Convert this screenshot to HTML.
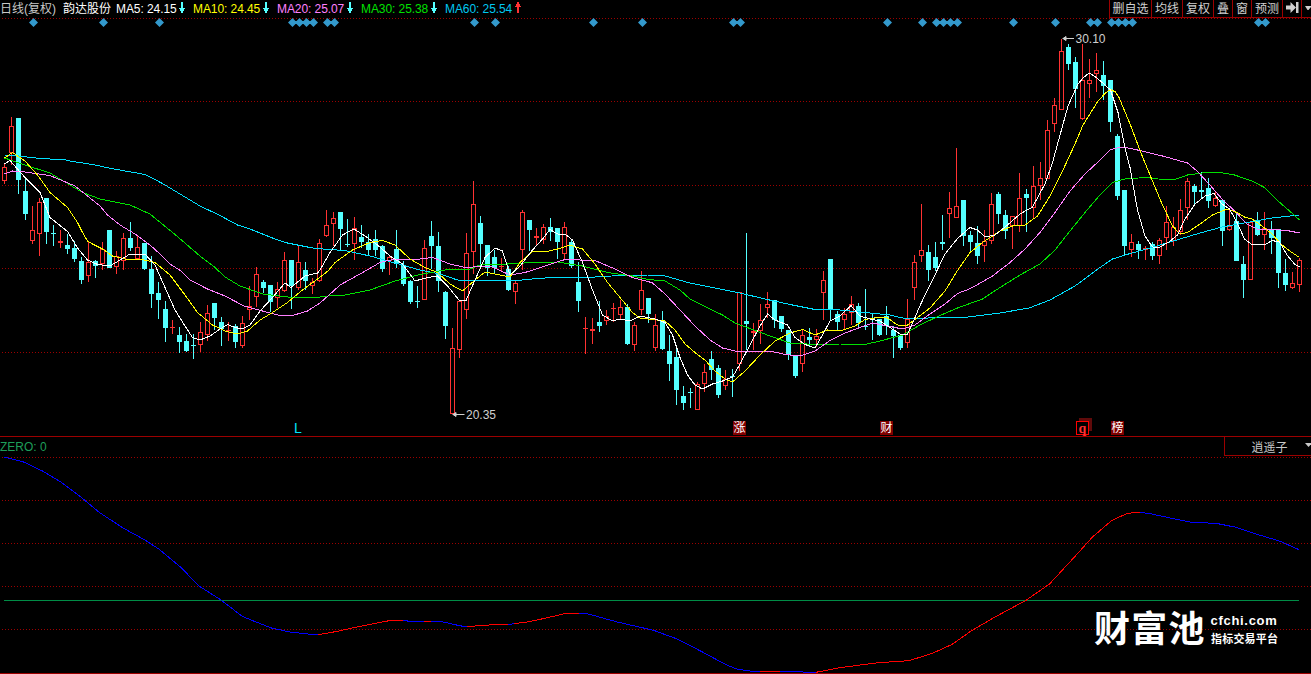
<!DOCTYPE html>
<html lang="zh"><head><meta charset="utf-8"><title>韵达股份 日线</title>
<style>
html,body{margin:0;padding:0;background:#000;}
body{width:1311px;height:674px;overflow:hidden;position:relative;font-family:"Liberation Sans","Noto Sans CJK SC",sans-serif;}
svg{position:absolute;left:0;top:0;display:block}
.t{position:absolute;white-space:nowrap;font-size:12px;line-height:14px;}
.hd{top:2px;}
.btn{position:absolute;top:0;height:18px;border-left:1px solid #9c0000;border-bottom:1px solid #9c0000;color:#d0d0d0;font-size:12px;line-height:19px;text-align:center;box-sizing:border-box;white-space:nowrap}
.tag{position:absolute;top:421px;width:13px;height:14px;background:#800000;color:#fff;font-size:12px;line-height:14px;text-align:center;overflow:hidden}
</style></head><body>
<svg width="1311" height="674" viewBox="0 0 1311 674">
<rect width="1311" height="674" fill="#000"/>
<g shape-rendering="crispEdges">
<line x1="2" y1="18.5" x2="1311" y2="18.5" stroke="#9c0000" stroke-width="1" stroke-dasharray="1 2"/>
<line x1="2" y1="101.5" x2="1311" y2="101.5" stroke="#9c0000" stroke-width="1" stroke-dasharray="1 2"/>
<line x1="2" y1="185.5" x2="1311" y2="185.5" stroke="#9c0000" stroke-width="1" stroke-dasharray="1 2"/>
<line x1="2" y1="268.5" x2="1311" y2="268.5" stroke="#9c0000" stroke-width="1" stroke-dasharray="1 2"/>
<line x1="2" y1="352.5" x2="1311" y2="352.5" stroke="#9c0000" stroke-width="1" stroke-dasharray="1 2"/>
<line x1="2" y1="457.5" x2="1311" y2="457.5" stroke="#9c0000" stroke-width="1" stroke-dasharray="1 2"/>
<line x1="2" y1="500.5" x2="1311" y2="500.5" stroke="#9c0000" stroke-width="1" stroke-dasharray="1 2"/>
<line x1="2" y1="543.5" x2="1311" y2="543.5" stroke="#9c0000" stroke-width="1" stroke-dasharray="1 2"/>
<line x1="2" y1="586.5" x2="1311" y2="586.5" stroke="#9c0000" stroke-width="1" stroke-dasharray="1 2"/>
<line x1="2" y1="629.5" x2="1311" y2="629.5" stroke="#9c0000" stroke-width="1" stroke-dasharray="1 2"/>

<line x1="0" y1="436.5" x2="1311" y2="436.5" stroke="#9c0000" stroke-width="1"/>
<line x1="0" y1="673.5" x2="1311" y2="673.5" stroke="#9c0000" stroke-width="1"/>
<line x1="4" y1="600.5" x2="1299" y2="600.5" stroke="#008c46" stroke-width="1"/>
<path d="M18 118h1v76h-1z M16 118h5v62h-5z M25 177h1v43h-1z M23 191h5v23h-5z M46 198h1v46h-1z M44 198h5v34h-5z M53 225h1v21h-1z M51 233h5v1h-5z M67 234h1v20h-1z M65 245h5v4h-5z M74 241h1v21h-1z M72 248h5v11h-5z M81 257h1v27h-1z M79 261h5v19h-5z M95 260h1v18h-1z M93 261h5v5h-5z M109 230h1v38h-1z M107 230h5v38h-5z M130 222h1v29h-1z M128 238h5v10h-5z M144 243h1v27h-1z M142 243h5v26h-5z M151 256h1v52h-1z M149 269h5v25h-5z M158 282h1v37h-1z M156 293h5v7h-5z M165 301h1v41h-1z M163 309h5v19h-5z M179 327h1v26h-1z M177 335h5v7h-5z M186 334h1v18h-1z M184 341h5v10h-5z M193 334h1v25h-1z M191 345h5v1h-5z M214 303h1v27h-1z M212 303h5v15h-5z M221 317h1v29h-1z M219 322h5v7h-5z M235 324h1v24h-1z M233 326h5v16h-5z M263 280h1v13h-1z M261 282h5v6h-5z M270 285h1v27h-1z M268 285h5v17h-5z M291 260h1v49h-1z M289 260h5v26h-5z M305 262h1v28h-1z M303 270h5v11h-5z M340 212h1v39h-1z M338 212h5v17h-5z M347 219h1v28h-1z M345 244h5v1h-5z M361 225h1v23h-1z M359 237h5v5h-5z M368 234h1v21h-1z M366 242h5v8h-5z M375 230h1v26h-1z M373 239h5v11h-5z M382 245h1v27h-1z M380 246h5v23h-5z M396 230h1v38h-1z M394 249h5v15h-5z M403 261h1v25h-1z M401 265h5v19h-5z M410 280h1v24h-1z M408 281h5v21h-5z M417 286h1v22h-1z M415 301h5v1h-5z M431 221h1v48h-1z M429 236h5v10h-5z M438 232h1v60h-1z M436 246h5v35h-5z M445 291h1v48h-1z M443 292h5v34h-5z M480 216h1v50h-1z M478 223h5v21h-5z M487 245h1v31h-1z M485 245h5v23h-5z M494 250h1v24h-1z M492 257h5v11h-5z M508 266h1v25h-1z M506 269h5v21h-5z M529 220h1v31h-1z M527 220h5v10h-5z M550 218h1v23h-1z M548 227h5v5h-5z M557 228h1v31h-1z M555 228h5v14h-5z M571 240h1v28h-1z M569 242h5v24h-5z M578 262h1v50h-1z M576 282h5v19h-5z M599 301h1v31h-1z M597 322h5v4h-5z M627 304h1v41h-1z M625 307h5v37h-5z M648 298h1v25h-1z M646 298h5v16h-5z M662 311h1v39h-1z M660 321h5v28h-5z M669 335h1v46h-1z M667 351h5v13h-5z M676 349h1v56h-1z M674 357h5v33h-5z M683 386h1v24h-1z M681 396h5v7h-5z M690 388h1v20h-1z M688 392h5v1h-5z M711 351h1v29h-1z M709 359h5v11h-5z M718 365h1v33h-1z M716 368h5v27h-5z M732 369h1v28h-1z M730 376h5v1h-5z M746 233h1v117h-1z M744 321h5v3h-5z M774 300h1v28h-1z M772 300h5v20h-5z M781 316h1v16h-1z M779 316h5v13h-5z M788 330h1v30h-1z M786 330h5v25h-5z M795 356h1v22h-1z M793 356h5v20h-5z M809 328h1v18h-1z M807 337h5v3h-5z M830 259h1v61h-1z M828 259h5v50h-5z M837 311h1v20h-1z M835 314h5v8h-5z M858 303h1v24h-1z M856 306h5v17h-5z M865 289h1v41h-1z M863 326h5v1h-5z M872 314h1v26h-1z M870 318h5v1h-5z M879 319h1v17h-1z M877 319h5v16h-5z M886 306h1v29h-1z M884 316h5v10h-5z M893 326h1v32h-1z M891 330h5v6h-5z M900 335h1v15h-1z M898 335h5v13h-5z M928 245h1v36h-1z M926 252h5v18h-5z M935 242h1v29h-1z M933 257h5v11h-5z M942 215h1v35h-1z M940 242h5v2h-5z M963 200h1v46h-1z M961 200h5v36h-5z M970 231h1v20h-1z M968 235h5v7h-5z M977 226h1v38h-1z M975 243h5v13h-5z M998 192h1v32h-1z M996 194h5v20h-5z M1005 210h1v29h-1z M1003 215h5v16h-5z M1026 189h1v43h-1z M1024 194h5v4h-5z M1068 44h1v26h-1z M1066 47h5v17h-5z M1075 57h1v51h-1z M1073 62h5v27h-5z M1103 61h1v39h-1z M1101 75h5v11h-5z M1110 80h1v52h-1z M1108 80h5v42h-5z M1117 134h1v66h-1z M1115 136h5v60h-5z M1124 190h1v65h-1z M1122 190h5v56h-5z M1138 241h1v18h-1z M1136 244h5v6h-5z M1152 242h1v18h-1z M1150 244h5v12h-5z M1194 184h1v22h-1z M1192 186h5v6h-5z M1201 172h1v27h-1z M1199 190h5v2h-5z M1208 178h1v30h-1z M1206 188h5v13h-5z M1222 200h1v46h-1z M1220 200h5v31h-5z M1236 212h1v49h-1z M1234 221h5v40h-5z M1243 256h1v42h-1z M1241 264h5v16h-5z M1257 212h1v24h-1z M1255 221h5v14h-5z M1271 221h1v33h-1z M1269 229h5v9h-5z M1278 229h1v59h-1z M1276 229h5v44h-5z M1285 259h1v32h-1z M1283 273h5v12h-5z" fill="#54ffff"/>
<path d="M4 163h1v4h-1z M4 181h1v3h-1z M11 117h1v9h-1z M11 153h1v12h-1z M32 206h1v24h-1z M32 241h1v3h-1z M39 198h1v4h-1z M39 234h1v22h-1z M60 230h1v11h-1z M60 243h1v5h-1z M58 241h5v2h-5z M88 241h1v21h-1z M88 276h1v6h-1z M102 242h1v7h-1z M102 264h1v6h-1z M116 251h1v5h-1z M116 267h1v7h-1z M123 233h1v5h-1z M123 261h1v9h-1z M137 235h1v12h-1z M137 259h1v1h-1z M172 320h1v7h-1z M172 328h1v6h-1z M170 327h5v1h-5z M200 322h1v10h-1z M200 345h1v7h-1z M207 305h1v8h-1z M207 335h1v6h-1z M228 322h1v8h-1z M228 331h1v10h-1z M226 330h5v1h-5z M242 316h1v7h-1z M242 346h1v2h-1z M249 286h1v20h-1z M249 310h1v10h-1z M256 267h1v7h-1z M256 297h1v10h-1z M277 282h1v7h-1z M277 298h1v10h-1z M284 252h1v8h-1z M284 291h1v1h-1z M298 246h1v16h-1z M298 288h1v2h-1z M312 278h1v4h-1z M312 286h1v8h-1z M319 239h1v4h-1z M319 281h1v1h-1z M326 210h1v15h-1z M326 236h1v1h-1z M333 212h1v6h-1z M333 224h1v22h-1z M354 217h1v11h-1z M354 244h1v16h-1z M389 255h1v2h-1z M389 261h1v14h-1z M424 240h1v8h-1z M452 328h1v20h-1z M459 350h1v8h-1z M466 233h1v20h-1z M466 310h1v9h-1z M473 181h1v23h-1z M473 252h1v22h-1z M501 258h1v8h-1z M501 267h1v5h-1z M499 266h5v1h-5z M515 281h1v2h-1z M515 292h1v12h-1z M522 210h1v2h-1z M522 250h1v20h-1z M536 228h1v8h-1z M536 238h1v7h-1z M534 236h5v2h-5z M543 224h1v3h-1z M543 240h1v4h-1z M564 222h1v5h-1z M564 254h1v5h-1z M585 317h1v11h-1z M585 329h1v25h-1z M583 328h5v1h-5z M592 318h1v11h-1z M592 331h1v13h-1z M590 329h5v2h-5z M606 310h1v6h-1z M606 321h1v4h-1z M613 303h1v5h-1z M613 309h1v13h-1z M611 308h5v1h-5z M620 300h1v7h-1z M620 315h1v4h-1z M634 322h1v3h-1z M634 345h1v6h-1z M641 271h1v19h-1z M641 310h1v5h-1z M655 314h1v11h-1z M655 348h1v3h-1z M697 382h1v2h-1z M704 364h1v8h-1z M704 384h1v8h-1z M725 370h1v9h-1z M725 386h1v4h-1z M739 364h1v7h-1z M753 323h1v8h-1z M753 333h1v17h-1z M751 331h5v2h-5z M760 304h1v16h-1z M760 331h1v13h-1z M767 292h1v12h-1z M767 308h1v10h-1z M802 330h1v5h-1z M802 364h1v8h-1z M816 329h1v7h-1z M816 340h1v7h-1z M823 271h1v9h-1z M823 293h1v27h-1z M844 308h1v6h-1z M844 320h1v10h-1z M851 296h1v8h-1z M851 313h1v12h-1z M907 299h1v20h-1z M907 343h1v5h-1z M914 255h1v7h-1z M914 288h1v12h-1z M921 204h1v46h-1z M921 256h1v6h-1z M949 192h1v16h-1z M949 214h1v24h-1z M956 148h1v58h-1z M984 230h1v11h-1z M984 246h1v16h-1z M991 193h1v11h-1z M991 241h1v3h-1z M1012 226h1v23h-1z M1019 173h1v25h-1z M1019 226h1v6h-1z M1033 166h1v20h-1z M1033 208h1v11h-1z M1040 162h1v16h-1z M1040 186h1v14h-1z M1047 120h1v10h-1z M1054 98h1v7h-1z M1054 124h1v8h-1z M1061 39h1v12h-1z M1082 44h1v36h-1z M1082 119h1v1h-1z M1089 59h1v21h-1z M1089 84h1v14h-1z M1096 53h1v17h-1z M1096 74h1v18h-1z M1131 234h1v8h-1z M1131 250h1v7h-1z M1145 246h1v2h-1z M1145 250h1v10h-1z M1143 248h5v2h-5z M1159 238h1v2h-1z M1159 256h1v8h-1z M1166 206h1v16h-1z M1166 238h1v12h-1z M1173 217h1v10h-1z M1173 241h1v5h-1z M1180 199h1v11h-1z M1180 232h1v3h-1z M1187 178h1v3h-1z M1187 208h1v12h-1z M1215 192h1v6h-1z M1215 206h1v1h-1z M1229 209h1v17h-1z M1229 230h1v1h-1z M1250 221h1v1h-1z M1264 212h1v16h-1z M1264 235h1v15h-1z M1292 272h1v11h-1z M1292 288h1v1h-1z M1299 258h1v2h-1z M1299 285h1v7h-1z" fill="#ff3232"/>
<path d="M2 167h5v14h-5z M3 168h3v12h-3z M9 126h5v27h-5z M10 127h3v25h-3z M30 230h5v11h-5z M31 231h3v9h-3z M37 202h5v32h-5z M38 203h3v30h-3z M86 262h5v14h-5z M87 263h3v12h-3z M100 249h5v15h-5z M101 250h3v13h-3z M114 256h5v11h-5z M115 257h3v9h-3z M121 238h5v23h-5z M122 239h3v21h-3z M135 247h5v12h-5z M136 248h3v10h-3z M198 332h5v13h-5z M199 333h3v11h-3z M205 313h5v22h-5z M206 314h3v20h-3z M240 323h5v23h-5z M241 324h3v21h-3z M247 306h5v4h-5z M248 307h3v2h-3z M254 274h5v23h-5z M255 275h3v21h-3z M275 289h5v9h-5z M276 290h3v7h-3z M282 260h5v31h-5z M283 261h3v29h-3z M296 262h5v26h-5z M297 263h3v24h-3z M310 282h5v4h-5z M311 283h3v2h-3z M317 243h5v38h-5z M318 244h3v36h-3z M324 225h5v11h-5z M325 226h3v9h-3z M331 218h5v6h-5z M332 219h3v4h-3z M352 228h5v16h-5z M353 229h3v14h-3z M387 257h5v4h-5z M388 258h3v2h-3z M422 248h5v52h-5z M423 249h3v50h-3z M450 348h5v66h-5z M451 349h3v64h-3z M457 301h5v49h-5z M458 302h3v47h-3z M464 253h5v57h-5z M465 254h3v55h-3z M471 204h5v48h-5z M472 205h3v46h-3z M513 283h5v9h-5z M514 284h3v7h-3z M520 212h5v38h-5z M521 213h3v36h-3z M541 227h5v13h-5z M542 228h3v11h-3z M562 227h5v27h-5z M563 228h3v25h-3z M604 316h5v5h-5z M605 317h3v3h-3z M618 307h5v8h-5z M619 308h3v6h-3z M632 325h5v20h-5z M633 326h3v18h-3z M639 290h5v20h-5z M640 291h3v18h-3z M653 325h5v23h-5z M654 326h3v21h-3z M695 384h5v26h-5z M696 385h3v24h-3z M702 372h5v12h-5z M703 373h3v10h-3z M723 379h5v7h-5z M724 380h3v5h-3z M737 292h5v72h-5z M738 293h3v70h-3z M758 320h5v11h-5z M759 321h3v9h-3z M765 304h5v4h-5z M766 305h3v2h-3z M800 335h5v29h-5z M801 336h3v27h-3z M814 336h5v4h-5z M815 337h3v2h-3z M821 280h5v13h-5z M822 281h3v11h-3z M842 314h5v6h-5z M843 315h3v4h-3z M849 304h5v9h-5z M850 305h3v7h-3z M905 319h5v24h-5z M906 320h3v22h-3z M912 262h5v26h-5z M913 263h3v24h-3z M919 250h5v6h-5z M920 251h3v4h-3z M947 208h5v6h-5z M948 209h3v4h-3z M954 206h5v12h-5z M955 207h3v10h-3z M982 241h5v5h-5z M983 242h3v3h-3z M989 204h5v37h-5z M990 205h3v35h-3z M1010 216h5v10h-5z M1011 217h3v8h-3z M1017 198h5v28h-5z M1018 199h3v26h-3z M1031 186h5v22h-5z M1032 187h3v20h-3z M1038 178h5v8h-5z M1039 179h3v6h-3z M1045 130h5v49h-5z M1046 131h3v47h-3z M1052 105h5v19h-5z M1053 106h3v17h-3z M1059 51h5v59h-5z M1060 52h3v57h-3z M1080 80h5v39h-5z M1081 81h3v37h-3z M1087 80h5v4h-5z M1088 81h3v2h-3z M1094 70h5v4h-5z M1095 71h3v2h-3z M1129 242h5v8h-5z M1130 243h3v6h-3z M1157 240h5v16h-5z M1158 241h3v14h-3z M1164 222h5v16h-5z M1165 223h3v14h-3z M1171 227h5v14h-5z M1172 228h3v12h-3z M1178 210h5v22h-5z M1179 211h3v20h-3z M1185 181h5v27h-5z M1186 182h3v25h-3z M1213 198h5v8h-5z M1214 199h3v6h-3z M1227 226h5v4h-5z M1228 227h3v2h-3z M1248 222h5v58h-5z M1249 223h3v56h-3z M1262 228h5v7h-5z M1263 229h3v5h-3z M1290 283h5v5h-5z M1291 284h3v3h-3z M1297 260h5v25h-5z M1298 261h3v23h-3z" fill="#ff3232" fill-rule="evenodd"/>

</g>
<path d="M29.0 22.5L33.5 18L38.0 22.5L33.5 27z M99.0 22.5L103.5 18L108.0 22.5L103.5 27z M155.0 22.5L159.5 18L164.0 22.5L159.5 27z M288.0 22.5L292.5 18L297.0 22.5L292.5 27z M295.0 22.5L299.5 18L304.0 22.5L299.5 27z M302.0 22.5L306.5 18L311.0 22.5L306.5 27z M309.0 22.5L313.5 18L318.0 22.5L313.5 27z M323.0 22.5L327.5 18L332.0 22.5L327.5 27z M330.0 22.5L334.5 18L339.0 22.5L334.5 27z M470.0 22.5L474.5 18L479.0 22.5L474.5 27z M491.0 22.5L495.5 18L500.0 22.5L495.5 27z M589.0 22.5L593.5 18L598.0 22.5L593.5 27z M638.0 22.5L642.5 18L647.0 22.5L642.5 27z M729.0 22.5L733.5 18L738.0 22.5L733.5 27z M736.0 22.5L740.5 18L745.0 22.5L740.5 27z M883.0 22.5L887.5 18L892.0 22.5L887.5 27z M918.0 22.5L922.5 18L927.0 22.5L922.5 27z M932.0 22.5L936.5 18L941.0 22.5L936.5 27z M939.0 22.5L943.5 18L948.0 22.5L943.5 27z M946.0 22.5L950.5 18L955.0 22.5L950.5 27z M953.0 22.5L957.5 18L962.0 22.5L957.5 27z M1009.0 22.5L1013.5 18L1018.0 22.5L1013.5 27z M1051.0 22.5L1055.5 18L1060.0 22.5L1055.5 27z M1086.0 22.5L1090.5 18L1095.0 22.5L1090.5 27z M1093.0 22.5L1097.5 18L1102.0 22.5L1097.5 27z M1107.0 22.5L1111.5 18L1116.0 22.5L1111.5 27z M1114.0 22.5L1118.5 18L1123.0 22.5L1118.5 27z M1121.0 22.5L1125.5 18L1130.0 22.5L1125.5 27z M1128.0 22.5L1132.5 18L1137.0 22.5L1132.5 27z M1254.0 22.5L1258.5 18L1263.0 22.5L1258.5 27z M1261.0 22.5L1265.5 18L1270.0 22.5L1265.5 27z" fill="#3399cc"/>
<polyline points="4.5,155.5 15,155.5 28.75,157.25 43,158.75 63.75,159.5 71.25,161.25 92.5,164.5 112.5,168.75 131,172 145,174.5 162.5,183.5 200,206 219,215 237.5,225 250,229 262.5,234 275,239 287.5,243 300,245.5 312.5,248 328,249.5 345,250.5 370,256 395,263 420,270 440,274 457.5,280 495,280 522,280 532,279 545,278 570,277 595,277 620,275.5 648,275 665,276 690,283 715,288 740,293 765,299 790,304.5 815,309.5 840,310 865,312.5 890,315 902.5,318 927.5,318 952.5,317.5 968,317 1000,313 1029,308 1050,300 1075,286 1100,267.5 1112.5,259 1125,255 1150,248 1175,240.5 1200,233 1222,227 1247,222.5 1272,218 1299.5,215" fill="none" stroke="#00e0ff" stroke-width="1" stroke-linejoin="round" shape-rendering="crispEdges"/>
<polyline points="4.5,158 25,165 50,173 82.5,192.5 100,199 130,205 150,214 175,234.5 200,256 215,267.5 225,277 240,286 262.5,294 287.5,297 312.5,298 328,296 345,295 370,290 395,281 420,274.5 445,270 470,269 482.5,264 507.5,264 532.5,262.5 557.5,262 582.5,266 607.5,272.5 632.5,276 648,279.5 665,281 680,290 690,299 710,309 722.5,315 735,323 752.5,329.5 770,336 790,343 815,344.5 840,344 865,344.5 880,341 902.5,335 920,325 940,315.5 957.5,308 982.5,299 1000,287.5 1020,275 1040,264 1055,250 1070,231 1085,212.5 1100,195 1112.5,182.5 1125,179 1145.5,177.5 1158,179 1175,179.5 1187.5,175 1202,173 1220,172.5 1234.5,175 1252,181 1264.5,187.5 1277,200 1289.5,211 1299.5,220" fill="none" stroke="#00e000" stroke-width="1" stroke-linejoin="round" shape-rendering="crispEdges"/>
<polyline points="4.5,174 12.5,171 25,172 50,175.5 75,186 100,206 107.5,215 120,225 135,234 150,245 160,254 170,264 181,271 190,280 207.5,289 225,296 244,306 262.5,311 277.5,315 292.5,315.5 307.5,311 320,303 328,296 340,285 360,274 380,262.5 395,259 420,259 432.5,257.5 450,264 465,267.5 490,266 510,275 525,272.5 545,266 565,259.5 595,260.5 615,269 632.5,277.5 648,281.5 652.5,283 665,294 680,310 695,326 710,340 722.5,348 735,351 752.5,351 770,351 785,354.5 800,356 815,351 830,340.5 845,333 860,327.5 872.5,323 887.5,326 902.5,329 915,325 930,314 945,304 957.5,293.5 968,289.5 975,286 992.5,276 1010,262.5 1025,249 1040,232.5 1055,212.5 1070,191 1085,174 1100,160 1110,150 1120,147 1126,147.5 1137.5,150 1162.5,156 1187.5,163 1197,171 1209.5,184.5 1222,199 1234.5,211 1247,224 1257,229 1272,229.5 1287,230.5 1299.5,233" fill="none" stroke="#ff80ff" stroke-width="1" stroke-linejoin="round" shape-rendering="crispEdges"/>
<polyline points="4.5,158 12.5,152.5 25,161 37.5,175 50,192.5 67.5,207.5 72.5,215 77.5,222.5 82.5,232.5 87.5,241 92.5,244 102.5,249 112.5,256 125,259 140,259 155,262.5 170,275 185,295 197.5,312.5 212.5,325 225,331 237.5,334 247.5,331 260,320 272.5,312.5 287.5,302.5 302.5,290 317.5,279 328,271 335,262.5 352.5,250 370,242.5 382.5,240.5 395,245 410,259 425,267.5 437.5,272.5 450,284 462.5,291 475,280 485,272 500,275 510,277 520,262.5 532.5,251 545,252 557.5,249 570,245 582.5,249 595,264 607.5,282.5 620,297.5 632.5,312.5 640,318 652.5,319.5 665,321 675,330 685,344 695,352.5 705,360 715,371 725,379 732.5,382 745,371 760,355 775,341 790,333 802.5,329.5 815,335 827.5,330 840,331 855,326 865,319.5 877.5,317.5 887.5,318 897.5,325 907.5,325 917.5,317.5 930,308 945,291 957.5,270.5 970,252.5 982.5,242.5 1000,231 1012.5,226 1025,225 1037.5,216 1050,196 1062.5,171 1075,144 1083,125 1098,101 1105.5,93 1110.5,89.5 1115.5,92 1119,97.5 1130.5,125 1136,140 1143,158 1152.5,181 1162.5,205 1172.5,226 1180,234 1187.5,232.5 1200,224 1212.5,215 1227,209 1237,212.5 1244.5,217 1252,219 1262,226 1272,234 1282,245 1292,252.5 1299.5,257.5" fill="none" stroke="#ffff00" stroke-width="1" stroke-linejoin="round" shape-rendering="crispEdges"/>
<polyline points="4.5,164 10,160.5 25,177.5 40,192.5 50,217.5 67.5,231.5 77.5,248 87.5,260 97.5,264.5 110,266 120,260 130,254 145,254 155,265 165,287.5 175,310 185,326 192.5,337.5 200,340 210,336 220,329 227.5,324.5 235,327.5 242.5,329 250,325 260,311 272.5,297.5 285,283 291,287.5 305,276 317.5,273 320,270 330,252.5 342.5,235 354,229 365,236 377.5,245 390,256 402.5,264 415,281 427.5,277.5 437.5,276 447.5,286 459,300 466,300.5 475,280 485,257.5 495,248 502.5,251 510,275 520,266 532.5,250 542.5,239 550,229.5 557.5,234 565,234 572.5,240 582.5,262.5 592.5,290 602.5,315 612.5,321 620,319 630,321 640,316 655,319 665,322.5 672.5,335 680,357.5 687.5,375 695,385 702.5,389 712.5,384 722.5,381 732.5,377 740,364 750,345 760,326 767.5,314 775,320 787.5,325 795,337.5 805,344.5 815,348 822.5,335 830,321 840,316 851,305.5 860,316 870,319 880,321 890,327.5 900,334 907.5,334 915,317.5 919,308 925,295 932.5,280 945,254 957.5,238.5 970,227.5 977.5,230 985,237 995,235 1007.5,225 1020,214 1032.5,207 1045,184 1052.5,162.5 1058,142.5 1068,106 1078,84 1083,78 1089,73 1095,76.5 1100.5,81 1110.5,90 1118,112.5 1125.5,150 1130,167.5 1137.5,210 1145,236 1152.5,247 1160,247 1169,242 1177.5,235 1185,219 1195,204 1205,196 1214,193.5 1222,204 1229.5,209 1237,222.5 1244.5,239 1252,244.5 1264.5,245 1272,240.5 1279.5,242 1287,255 1294.5,264 1299.5,267" fill="none" stroke="#ffffff" stroke-width="1" stroke-linejoin="round" shape-rendering="crispEdges"/>
<polyline points="4.5,457 23.5,462 43.5,471.5 61.5,482.5 79.5,496 99.5,512.5 123,528 145,540 159.5,549.5 181,567.5 199,586 221,600 242.5,616.5 253.5,621 271.5,628 290,632 308,634 318.5,634.6" fill="none" stroke="#0000ff" stroke-width="1" stroke-linejoin="round" shape-rendering="crispEdges"/>
<polyline points="318.5,634.6 337,631.4 355,627.4 373,623.8 387.5,621 402,620 403,620.182" fill="none" stroke="#ff0000" stroke-width="1" stroke-linejoin="round" shape-rendering="crispEdges"/>
<polyline points="403,620.182 407.5,621 424,621.102" fill="none" stroke="#0000ff" stroke-width="1" stroke-linejoin="round" shape-rendering="crispEdges"/>
<polyline points="424,621.102 431,621.145" fill="none" stroke="#ff0000" stroke-width="1" stroke-linejoin="round" shape-rendering="crispEdges"/>
<polyline points="431,621.145 440,621.2 454,624.5 465,626.7 467,626.559" fill="none" stroke="#0000ff" stroke-width="1" stroke-linejoin="round" shape-rendering="crispEdges"/>
<polyline points="467,626.559 490.5,624.9 508,624.513" fill="none" stroke="#ff0000" stroke-width="1" stroke-linejoin="round" shape-rendering="crispEdges"/>
<polyline points="508,624.513 508.6,624.5 514,623.758" fill="none" stroke="#0000ff" stroke-width="1" stroke-linejoin="round" shape-rendering="crispEdges"/>
<polyline points="514,623.758 526.8,622 545,618.3 563,614 577.5,613.3 579,613.397" fill="none" stroke="#ff0000" stroke-width="1" stroke-linejoin="round" shape-rendering="crispEdges"/>
<polyline points="579,613.397 588.3,614 617.3,622 653.5,630.3 675.3,638.3 700.6,651 726,664.7 736.8,669 751.3,671.2 760,671.291" fill="none" stroke="#0000ff" stroke-width="1" stroke-linejoin="round" shape-rendering="crispEdges"/>
<polyline points="760,671.291 780,671.5" fill="none" stroke="#ff0000" stroke-width="1" stroke-linejoin="round" shape-rendering="crispEdges"/>
<polyline points="780,671.5 816,672.3" fill="none" stroke="#0000ff" stroke-width="1" stroke-linejoin="round" shape-rendering="crispEdges"/>
<polyline points="816,672.3 839,667.8 878,662.7 909,660.7 932.5,653.3 952,644.4 971.5,630.7 995,617 1026,600.3 1049.5,584 1073,558.6 1092.3,537.2 1111.8,520.4 1127.4,513.4 1139,512.2 1140,512.336" fill="none" stroke="#ff0000" stroke-width="1" stroke-linejoin="round" shape-rendering="crispEdges"/>
<polyline points="1140,512.336 1150.8,513.8 1170.3,518 1189.8,522 1217,523.5 1236.5,527.4 1256,534 1279.4,541 1299,549.7" fill="none" stroke="#0000ff" stroke-width="1" stroke-linejoin="round" shape-rendering="crispEdges"/>
<g fill="none" stroke="#d0d0d0" stroke-width="1">
<path d="M1062.5 38.5H1074M1063 38.5l3 -2v4z" fill="#d0d0d0"/>
<path d="M452.5 414.5H464.5M453 414.5l3 -2v4z" fill="#d0d0d0"/>
</g>
<text x="1075.5" y="43" font-family="Liberation Sans, sans-serif" font-size="12" fill="#d0d0d0">30.10</text>
<text x="466" y="419" font-family="Liberation Sans, sans-serif" font-size="12" fill="#d0d0d0">20.35</text>
<text x="294" y="433" font-family="Liberation Sans, sans-serif" font-size="14" fill="#00e5ff">L</text>
</svg>
<div class="t hd" style="left:0px;color:#c8c8c8">日线(复权)</div>
<div class="t hd" style="left:63px;color:#fff">韵达股份</div>
<div class="t hd" style="left:116px;letter-spacing:-0.080px;color:#fff">MA5: 24.15</div>
<div class="t hd" style="left:193px;letter-spacing:-0.080px;color:#ffff00">MA10: 24.45</div>
<div class="t hd" style="left:277px;letter-spacing:-0.080px;color:#ff80ff">MA20: 25.07</div>
<div class="t hd" style="left:361px;letter-spacing:-0.080px;color:#00e000">MA30: 25.38</div>
<div class="t hd" style="left:445px;letter-spacing:-0.080px;color:#00c8f0">MA60: 25.54</div>
<svg width="530" height="16" viewBox="0 0 530 16" style="left:0;top:0" shape-rendering="crispEdges">
<path d="M181 2h2v6h2v1h-1v2h-1v2h-2v-2h-1v-2h-1v-1h2z M265 2h2v6h2v1h-1v2h-1v2h-2v-2h-1v-2h-1v-1h2z M349 2h2v6h2v1h-1v2h-1v2h-2v-2h-1v-2h-1v-1h2z M433 2h2v6h2v1h-1v2h-1v2h-2v-2h-1v-2h-1v-1h2z" fill="#54ffff"/>
<path d="M517 13h2v-6h2v-1h-1v-2h-1v-2h-2v2h-1v2h-1v1h2z" fill="#ff3232"/>
</svg>
<div class="btn" style="left:1109px;width:42px">删自选</div>
<div class="btn" style="left:1151px;width:31px">均线</div>
<div class="btn" style="left:1182px;width:31px">复权</div>
<div class="btn" style="left:1213px;width:19px">叠</div>
<div class="btn" style="left:1232px;width:19px">窗</div>
<div class="btn" style="left:1251px;width:31px">预测</div>
<div class="btn" style="left:1282px;width:19px"></div>
<div class="btn" style="left:1301px;width:10px"></div>
<svg width="29" height="18" viewBox="0 0 29 18" style="left:1282px;top:0">
<path d="M4 5.5h4.5v-3.5l5.5 5.5l-5.5 5.5v-3.5h-4.500z M14 2h2.500v11h-2.500z" fill="#d0d0d0"/>
<path d="M23 6h6v1l-2.500 3h-1z" fill="#d0d0d0"/>
</svg>
<div class="tag" style="left:733px">涨</div>
<div class="tag" style="left:880px">财</div>
<div style="position:absolute;left:1079px;top:418px;width:13px;height:13px;background:#600a0a"></div>
<div class="tag" style="left:1076px;width:11px;height:12px;border:1px solid #ff0000;background:#000;color:#ff3030;font-weight:bold;font-family:'Liberation Serif',serif;font-size:14px;line-height:13px;overflow:visible">q</div>
<div class="tag" style="left:1111px">榜</div>
<div class="t" style="left:0;top:440px;color:#1e9e5a">ZERO: 0</div>
<div style="position:absolute;left:1224px;top:437px;width:87px;height:19px;border-left:1px solid #9c0000;border-bottom:1px solid #9c0000;box-sizing:border-box"></div>
<div class="t" style="left:1251.500px;top:441px;color:#c8c8c8">逍遥子</div>
<svg width="8" height="6" viewBox="0 0 8 6" style="left:1304px;top:443px"><path d="M1 0h7l-3.5 4z" fill="#c8c8c8"/></svg>
<div style="position:absolute;left:1094px;top:606.500px;font-size:36px;line-height:46px;font-weight:bold;color:#fff;white-space:nowrap;letter-spacing:1.200px">财富池</div>
<div style="position:absolute;left:1210.500px;top:612.500px;font-size:13px;line-height:16px;font-weight:bold;color:#fff;white-space:nowrap;letter-spacing:0.700px">cfchi.com</div>
<div style="position:absolute;left:1211px;top:632px;font-size:11px;line-height:15px;font-weight:bold;color:#fff;white-space:nowrap;letter-spacing:0.200px">指标交易平台</div>

</body></html>
